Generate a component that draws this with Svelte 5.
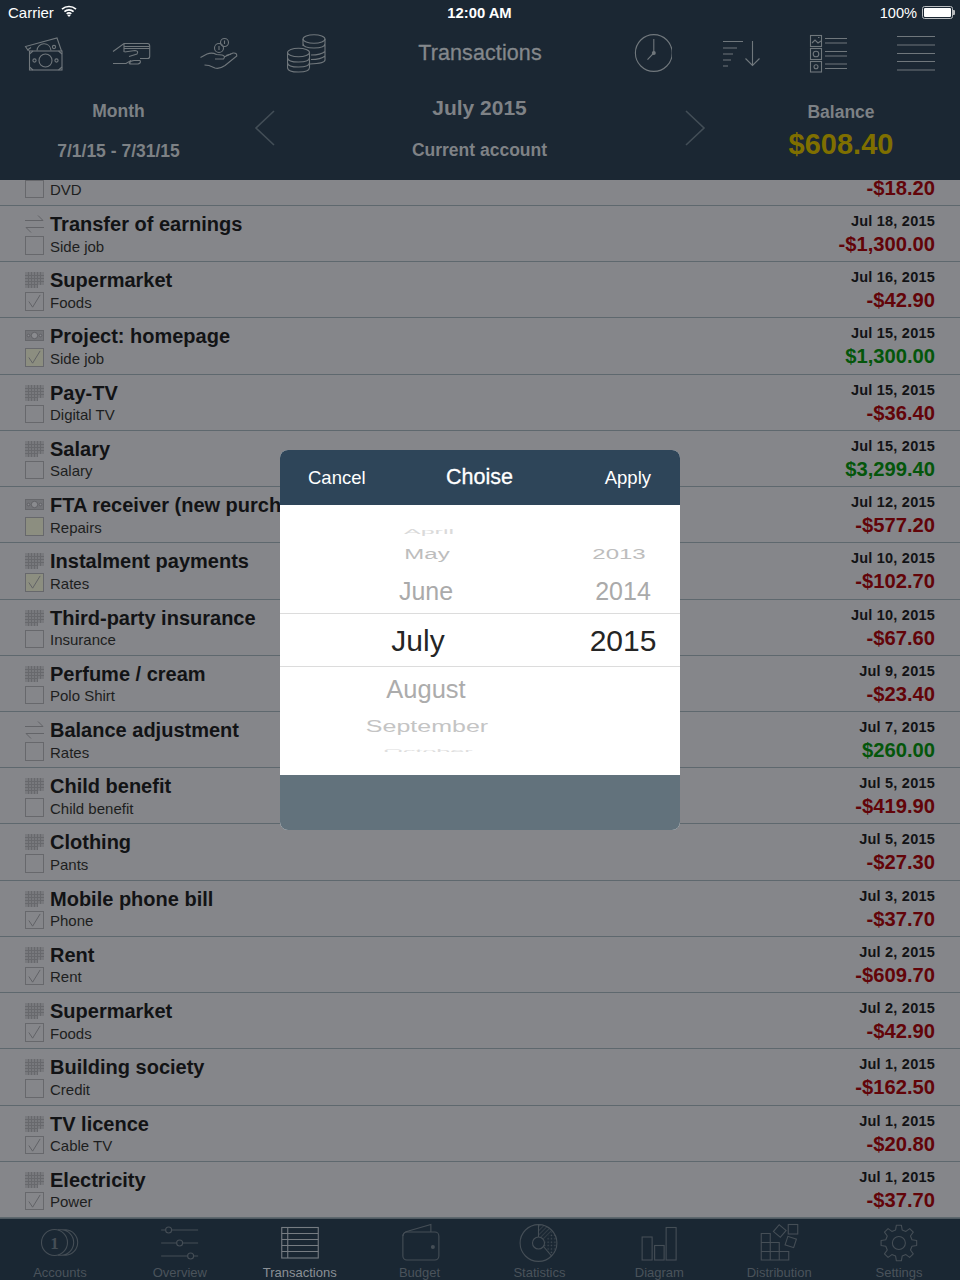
<script>
  const rows = [
    { t: '', s: 'DVD', d: '', a: '-$18.20', k: '', c: 0 },
    { t: 'Transfer of earnings', s: 'Side job', d: 'Jul 18, 2015', a: '-$1,300.00', k: 'transfer', c: 0 },
    { t: 'Supermarket', s: 'Foods', d: 'Jul 16, 2015', a: '-$42.90', k: 'grid', c: 1 },
    { t: 'Project: homepage', s: 'Side job', d: 'Jul 15, 2015', a: '$1,300.00', k: 'money', c: 1, y: 1 },
    { t: 'Pay-TV', s: 'Digital TV', d: 'Jul 15, 2015', a: '-$36.40', k: 'grid', c: 0 },
    { t: 'Salary', s: 'Salary', d: 'Jul 15, 2015', a: '$3,299.40', k: 'grid', c: 0 },
    { t: 'FTA receiver (new purchase)', s: 'Repairs', d: 'Jul 12, 2015', a: '-$577.20', k: 'money', c: 0, y: 1 },
    { t: 'Instalment payments', s: 'Rates', d: 'Jul 10, 2015', a: '-$102.70', k: 'grid', c: 1, y: 1 },
    { t: 'Third-party insurance', s: 'Insurance', d: 'Jul 10, 2015', a: '-$67.60', k: 'grid', c: 0 },
    { t: 'Perfume / cream', s: 'Polo Shirt', d: 'Jul 9, 2015', a: '-$23.40', k: 'grid', c: 0 },
    { t: 'Balance adjustment', s: 'Rates', d: 'Jul 7, 2015', a: '$260.00', k: 'transfer', c: 0 },
    { t: 'Child benefit', s: 'Child benefit', d: 'Jul 5, 2015', a: '-$419.90', k: 'grid', c: 0 },
    { t: 'Clothing', s: 'Pants', d: 'Jul 5, 2015', a: '-$27.30', k: 'grid', c: 0 },
    { t: 'Mobile phone bill', s: 'Phone', d: 'Jul 3, 2015', a: '-$37.70', k: 'grid', c: 1 },
    { t: 'Rent', s: 'Rent', d: 'Jul 2, 2015', a: '-$609.70', k: 'grid', c: 1 },
    { t: 'Supermarket', s: 'Foods', d: 'Jul 2, 2015', a: '-$42.90', k: 'grid', c: 1 },
    { t: 'Building society', s: 'Credit', d: 'Jul 1, 2015', a: '-$162.50', k: 'grid', c: 0 },
    { t: 'TV licence', s: 'Cable TV', d: 'Jul 1, 2015', a: '-$20.80', k: 'grid', c: 1 },
    { t: 'Electricity', s: 'Power', d: 'Jul 1, 2015', a: '-$37.70', k: 'grid', c: 1 }
  ];
  const months = ['April', 'May', 'June', 'July', 'August', 'September', 'October'];
  const years = ['', '2013', '2014', '2015'];
  const tabs = ['Accounts', 'Overview', 'Transactions', 'Budget', 'Statistics', 'Diagram', 'Distribution', 'Settings'];

  const gearPath = (() => {
    const cx = 899, cy = 1243, n = 8, ro = 18, ri = 13.5;
    let d = '';
    for (let i = 0; i < n; i++) {
      const a = (i / n) * Math.PI * 2 - Math.PI / 2;
      const st = Math.PI / n;
      const pts = [
        [ri, a - st * 0.62], [ro, a - st * 0.36], [ro, a + st * 0.36], [ri, a + st * 0.62]
      ];
      for (const [r, t] of pts) {
        d += (d ? 'L' : 'M') + (cx + r * Math.cos(t)).toFixed(1) + ' ' + (cy + r * Math.sin(t)).toFixed(1);
      }
    }
    return d + 'Z';
  })();
</script>

{#snippet kindIcon(k)}
  {#if k === 'grid'}
    <svg class="kind" viewBox="0 0 19 16" width="19" height="16">
      <rect x="0" y="0" width="19" height="13" class="kfill" />
      <rect x="0" y="13" width="13" height="3" class="kfill" />
      <path d="M3.5 0V16M6.5 0V16M9.5 0V16M12.5 0V16M15.5 0V13M0 3.5H19M0 6.5H19M0 9.5H19M0 12.5H13" class="kgrid" />
    </svg>
  {:else if k === 'transfer'}
    <svg class="kind" viewBox="0 0 19 16" width="19" height="16">
      <path d="M0 4.5H18L13 -.5M19 11.5H1L6 16.5" class="kline" />
    </svg>
  {:else if k === 'money'}
    <svg class="kind" viewBox="0 0 19 16" width="19" height="16">
      <rect x="0.5" y="2.5" width="18" height="10" class="kmoney" />
      <circle cx="9.5" cy="7.5" r="3.2" class="kmoneyc" />
      <circle cx="3.5" cy="7.5" r="1.3" class="kmoneyc" />
      <circle cx="15.5" cy="7.5" r="1.3" class="kmoneyc" />
    </svg>
  {:else}
    <span class="kind"></span>
  {/if}
{/snippet}

<div class="page">
  <header class="head">
    <div class="status">
      <div class="st-left">
        <span>Carrier</span>
        <svg width="16" height="12" viewBox="0 0 16 12">
          <path d="M1 4.2C5 .6 11 .6 15 4.2M3.4 6.6C6 4.3 10 4.3 12.6 6.6M5.7 8.8C7 7.7 9 7.7 10.3 8.8" fill="none" stroke="#fff" stroke-width="1.7" />
          <path d="M8 12L6.2 10.1C7.2 9.3 8.8 9.3 9.8 10.1Z" fill="#fff" />
        </svg>
      </div>
      <span class="st-time">12:00 AM</span>
      <div class="st-right">
        <span>100%</span>
        <span class="batt"><i></i></span>
      </div>
    </div>

    <div class="tools">
      <div class="group">
        <div class="tool">
          <svg viewBox="23 32 40 40" width="40" height="40" class="ic">
            <rect x="29.5" y="50" width="32.5" height="19" />
            <path d="M29.5 53L33 50M62 53L58.5 50M29.5 66L33 69M62 66L58.5 69" />
            <circle cx="45.5" cy="59.5" r="6.5" />
            <circle cx="34.5" cy="59.5" r="1.6" />
            <circle cx="56.5" cy="59.5" r="1.6" />
            <path d="M28.5 50L25.5 45.5L57 37L61.5 50" />
            <path d="M37 49.5C37.5 41 50 40 51 49.5" />
            <circle cx="54" cy="46" r="1.6" />
            <path d="M27.5 49L31 46.5" />
          </svg>
        </div>
        <div class="tool">
          <svg viewBox="111 32 40 40" width="40" height="40" class="ic">
            <path d="M113 50.5L124 42.5H147.5Q149.7 42.5 149.7 45V55.5Q149.7 57.5 147.5 57.5H140" />
            <path d="M124 45.5H149.7M124 47.5H149.7" />
            <path d="M124 43V51M124.5 51L135 49.5Q139 50 137 53L129 55.5" />
            <path d="M113 62.5H126L131 59.5" />
            <path d="M129 62.5Q130.5 59.5 134 59.5H140Q141.5 62 138 63H132Q130 63 129 62.5" />
          </svg>
        </div>
        <div class="tool">
          <svg viewBox="199 32 40 40" width="40" height="40" class="ic">
            <circle cx="224.5" cy="41.5" r="4" />
            <circle cx="219" cy="47" r="4.5" />
            <path d="M200.5 56.5L207 53Q212 51 216.5 53.5L222 54Q226 55 223.5 58L215 58" />
            <path d="M224 56L233 52Q237 51.5 236.8 55L225 64.5Q219 68.5 215 67L209 64.5L204.5 64" />
            <path d="M226 54.5L231 53M219 45V49M224.5 39.5V43" />
          </svg>
        </div>
        <div class="tool">
          <svg viewBox="287 32 40 40" width="40" height="40" class="ic">
            <ellipse cx="314" cy="38" rx="11" ry="4.3" />
            <path d="M303 38V45M325 38V59Q325 62.5 310 63M303 42.5Q303 47 314 47Q325 47 325 42.5M311 54Q321 54 325 50.5M311 58.5Q321 58.5 325 55" />
            <ellipse cx="298.5" cy="51.5" rx="11" ry="4.3" />
            <path d="M287.5 51.5V66.5Q287.5 71 298.5 71Q309.5 71 309.5 66.5V51.5M287.5 56.5Q287.5 61 298.5 61Q309.5 61 309.5 56.5M287.5 61.5Q287.5 66 298.5 66Q309.5 66 309.5 61.5" />
          </svg>
        </div>
      </div>
      <h1 class="title">Transactions</h1>
      <div class="group">
        <div class="tool">
          <svg viewBox="632 32 40 40" width="40" height="40" class="ic">
            <circle cx="653.8" cy="52" r="18.4" />
            <path d="M653.8 38V52L647.5 58.7" />
            <circle cx="653.8" cy="52" r="2" class="solid" />
          </svg>
        </div>
        <div class="tool">
          <svg viewBox="720 32 40 40" width="40" height="40" class="ic">
            <path d="M723 40.5H743M723 47H737M723 53H733M723 59H731M723 65H728" />
            <path d="M752.5 40V65M745.5 57.5L752.5 64.5L759.5 57.5" />
          </svg>
        </div>
        <div class="tool">
          <svg viewBox="808 32 40 40" width="40" height="40" class="ic">
            <rect x="810.5" y="34.5" width="11" height="11" />
            <rect x="810.5" y="47.5" width="11" height="11" />
            <rect x="810.5" y="60.5" width="11" height="10.5" />
            <path d="M825 37.5H847M825 42H847M825 50.5H847M825 55H847M825 63H847M825 67.5H847" />
            <path d="M812 42L815 39L818 42L821 40M818 36.5H819.5" />
            <circle cx="816" cy="53" r="2.8" />
            <circle cx="816" cy="65.8" r="2" />
          </svg>
        </div>
        <div class="tool">
          <svg viewBox="896 32 40 40" width="40" height="40" class="ic">
            <path d="M897 35.5H935M897 44H935M897 52.5H935M897 60.5H935M897 69H935" />
          </svg>
        </div>
      </div>
    </div>

    <div class="period">
      <div class="p-left">
        <div>Month</div>
        <div class="range">7/1/15 - 7/31/15</div>
      </div>
      <svg class="chev" width="22" height="38" viewBox="0 0 22 38"><path d="M20 2L2 19L20 36" /></svg>
      <div class="p-mid">
        <div class="big">July 2015</div>
        <div class="acct">Current account</div>
      </div>
      <svg class="chev right" width="22" height="38" viewBox="0 0 22 38"><path d="M2 2L20 19L2 36" /></svg>
      <div class="p-right">
        <div>Balance</div>
        <div class="bal">$608.40</div>
      </div>
    </div>
  </header>

  <main class="list">
    {#each rows as r}
      <div class="row">
        <div class="marks">
          {@render kindIcon(r.k)}
          <span class="box" class:yellow={r.y}>
            {#if r.c}
              <svg viewBox="0 0 18 18" width="17" height="17"><path d="M3 9L7 15L15 2" /></svg>
            {/if}
          </span>
        </div>
        <div class="names">
          <div class="name">{r.t}</div>
          <div class="sub">{r.s}</div>
        </div>
        <div class="nums">
          <div class="date">{r.d}</div>
          <div class="amt" class:pos={!r.a.startsWith('-')}>{r.a}</div>
        </div>
      </div>
    {/each}
  </main>

  <nav class="tabs">
    {#each tabs as t, i}
      <div class="tab" class:on={i === 2}>
        <svg class="ticon" viewBox="{i * 119.875 + 30} 1221 60 42" width="60" height="42">
          {#if i === 0}
            <circle cx="54.5" cy="1242.5" r="13" />
            <path d="M58 1229.8H62A12.8 12.8 0 0 1 62 1255.3H58M62 1229.8H66A12.8 12.8 0 0 1 66 1255.3H62" />
            <text x="54.5" y="1248.5" class="one">1</text>
          {:else if i === 1}
            <path d="M161 1230H165.5M171.5 1230H198M161 1243H176.5M182.5 1243H198M161 1256H187.5M193.5 1256H198" />
            <circle cx="168.5" cy="1230" r="3" />
            <circle cx="179.5" cy="1243" r="3" />
            <circle cx="190.5" cy="1256" r="3" />
          {:else if i === 2}
            <rect x="281.5" y="1227.5" width="36.5" height="30.5" />
            <path d="M281.5 1233.5H318M281.5 1239.5H318M281.5 1245.5H318M281.5 1251.5H318M287.5 1227.5V1258" />
          {:else if i === 3}
            <rect x="402.5" y="1232" width="36" height="28" rx="4" />
            <path d="M402.5 1236Q403 1232 408 1231L430.5 1224.5V1232" />
            <circle cx="432.5" cy="1247" r="2" class="solid" />
          {:else if i === 4}
            <defs>
              <pattern id="hatch" width="3" height="3" patternUnits="userSpaceOnUse" patternTransform="rotate(45)">
                <path d="M0 0V3" />
              </pattern>
              <pattern id="dots" width="3.4" height="3.4" patternUnits="userSpaceOnUse">
                <circle cx="1.2" cy="1.2" r=".7" class="solid" />
              </pattern>
            </defs>
            <path d="M539 1224.6A18.4 18.4 0 0 1 553 1231L545 1239L539 1237Z" fill="url(#hatch)" class="nostroke" />
            <path d="M553 1231A18.4 18.4 0 0 1 552 1256L544 1246.5L545 1241Z" fill="url(#dots)" class="nostroke" />
            <circle cx="539" cy="1243" r="18.4" />
            <circle cx="539" cy="1243" r="6" />
            <path d="M539 1224.6V1237M544 1246.5L552 1256" />
          {:else if i === 5}
            <rect x="642.5" y="1237" width="10" height="23" />
            <rect x="655" y="1245.5" width="9.5" height="14.5" />
            <rect x="666.5" y="1227.5" width="10" height="32.5" />
          {:else if i === 6}
            <path d="M761.5 1233.5H770.5V1242.5H779.5V1251.5H789V1260H761.5ZM761.5 1242.5H770.5V1260M761.5 1251.5H779.5V1260" />
            <rect x="775.5" y="1226.5" width="9" height="9" transform="rotate(40 780 1231)" />
            <rect x="788.5" y="1224.5" width="9.5" height="9.5" />
            <rect x="786.5" y="1237.5" width="9" height="9" transform="rotate(18 791 1242)" />
          {:else}
            <path d={gearPath} stroke-linejoin="round" />
            <circle cx="899" cy="1243" r="6.5" />
          {/if}
        </svg>
        <span>{t}</span>
      </div>
    {/each}
  </nav>

  <div class="scrim">
    <section class="modal">
      <div class="m-head">
        <span class="m-btn">Cancel</span>
        <span class="m-title">Choise</span>
        <span class="m-btn end">Apply</span>
      </div>
      <div class="wheel">
        <div class="band"></div>
        {#each months as m, i}
          <div class="cell mon r{i}"><span>{m}</span></div>
        {/each}
        {#each years as y, i}
          {#if y}
            <div class="cell yr r{i}"><span>{y}</span></div>
          {/if}
        {/each}
      </div>
      <div class="m-foot"></div>
    </section>
  </div>
</div>

<style>
  :global(body) { margin: 0; background: #85868a; }
  .page {
    position: relative;
    width: 960px;
    height: 1280px;
    overflow: hidden;
    display: flex;
    flex-direction: column;
    font-family: "Liberation Sans", Arial, sans-serif;
    background: #85868a;
  }

  .head { height: 180px; flex: none; background: #1b2733; display: flex; flex-direction: column; color: #7f8286; position: relative; z-index: 1; }
  .status {
    height: 25px; flex: none; padding: 0 7px 0 8px;
    display: grid; grid-template-columns: 1fr auto 1fr; align-items: center;
    color: #fff; font-size: 15px;
  }
  .st-left { display: flex; align-items: center; gap: 7px; }
  .st-left svg { margin-top: -3px; }
  .st-time { font-weight: 700; font-size: 14.8px; transform: translateX(-1px); }
  .st-right { display: flex; align-items: center; justify-content: flex-end; gap: 5px; }
  .st-right span:first-child { font-size: 14.6px; }
  .batt { width: 27px; height: 9px; border: 1px solid #b9bcbf; border-radius: 2.5px; padding: 1px; position: relative; display: block; }
  .batt i { display: block; width: 100%; height: 100%; background: #fff; border-radius: 1px; }
  .batt::after { content: ""; position: absolute; right: -3px; top: 3px; width: 2px; height: 5px; background: #b9bcbf; border-radius: 0 1px 1px 0; }

  .tools { height: 55px; flex: none; display: flex; align-items: center; justify-content: space-between; }
  .group { display: flex; }
  .tool { width: 88px; display: flex; justify-content: center; }
  .group:first-child .tool { transform: translateX(-1px); }
  .ic { fill: none; stroke: #70777c; stroke-width: 1.1; display: block; }
  .ic .solid { fill: #70777c; stroke: none; }
  .title { margin: 1px 0 0; font-size: 21.5px; font-weight: 400; color: #84888c; letter-spacing: 0.1px; -webkit-text-stroke: 0.3px #84888c; }

  .period {
    flex: 1;
    display: grid;
    grid-template-columns: 237px 56px 1fr 56px 238px;
    align-items: center;
    text-align: center;
    font-weight: 700;
    font-size: 17px;
  }
  .chev { justify-self: center; margin-top: -5px; fill: none; stroke: #434e57; stroke-width: 1.6; }
  .chev.right { transform: translateX(1px); }
  .p-left { display: flex; flex-direction: column; gap: 18.5px; margin-top: 3px; font-size: 17.5px; color: #7d8185; }
  .range { font-size: 17.5px; }
  .p-mid { display: flex; flex-direction: column; gap: 20.5px; margin-top: -3px; }
  .big { font-size: 21px; color: #7f8286; }
  .acct { font-size: 17.5px; color: #7f8286; }
  .p-right { display: flex; flex-direction: column; gap: 5px; margin-top: 2px; font-size: 17.5px; color: #7d8185; }
  .bal { font-size: 29px; color: #7f6f00; line-height: 32px; }

  .list { flex: 1; min-height: 0; overflow: hidden; }
  .row {
    height: 56.22px;
    box-sizing: border-box;
    border-bottom: 1.5px solid #5e686e;
    padding: 0 25px;
    display: grid;
    grid-template-columns: 25px 1fr auto;
    color: #121315;
  }
  .row:first-child { margin-top: -30.2px; }
  .marks { display: flex; flex-direction: column; padding-top: 10px; }
  .kind { display: block; height: 16px; margin-bottom: 4px; fill: none; overflow: visible; }
  .kfill { fill: #78797d; }
  .kgrid { stroke: #68696d; stroke-width: 1; fill: none; }
  .kline { stroke: #636468; stroke-width: 1; fill: none; }
  .kmoney { fill: #737478; stroke: #66676b; }
  .kmoneyc { fill: #8a8b8f; stroke: #5a5b5f; stroke-width: .8; }
  .box { width: 18.5px; height: 18.5px; box-sizing: border-box; border: 1px solid #67686c; display: block; }
  .box svg { display: block; fill: none; stroke: #5f6064; stroke-width: 1; }
  .box.yellow { background: #8c8e80; }
  .names { padding-top: 6px; min-width: 0; white-space: nowrap; }
  .name { font-size: 20px; font-weight: 700; line-height: 24px; height: 24px; }
  .sub { font-size: 15px; line-height: 20px; color: #1d1e20; margin-top: .5px; }
  .nums { text-align: right; padding-top: 6px; }
  .date { font-size: 14.5px; font-weight: 700; line-height: 18px; height: 18px; letter-spacing: 0.22px; }
  .amt { font-size: 20.2px; font-weight: 700; line-height: 24px; color: #620409; margin-top: 2px; }
  .amt.pos { color: #04560b; }

  .tabs {
    height: 62px; flex: none; background: #1a2733; border-top: 1px solid #4f5a61; box-sizing: border-box;
    display: grid; grid-template-columns: repeat(8, 119.875px);
    position: relative; z-index: 1;
  }
  .tab { display: flex; flex-direction: column; align-items: center; font-size: 13px; color: #4a535b; }
  .tab.on { color: #8a9096; }
  .ticon { display: block; margin-top: 2px; height: 42px; fill: none; stroke: #454e56; stroke-width: 1.1; }
  .tab.on .ticon { stroke: #767c82; }
  .ticon :global(.solid) { fill: #454e56; stroke: none; }
  .ticon .nostroke { stroke: none; }
  .ticon .one { font: 700 17px "Liberation Serif", serif; text-anchor: middle; fill: #454e56; stroke: none; }
  .tab span { line-height: 15px; margin-top: 2px; }

  .scrim { position: absolute; inset: 0; z-index: 2; display: flex; align-items: center; justify-content: center; }
  .modal { width: 400px; height: 380px; border-radius: 8px; overflow: hidden; display: flex; flex-direction: column; background: #fff; }
  .m-head {
    height: 55px; flex: none; background: #2e4559; color: #fff;
    display: grid; grid-template-columns: 1fr auto 1fr; align-items: center; padding: 0 29px 0 28px;
  }
  .m-btn { font-size: 18.5px; }
  .m-btn.end { justify-self: end; }
  .m-title { font-size: 21.5px; font-weight: 400; -webkit-text-stroke: 0.3px #fff; margin-top: -1px; }
  .m-foot { height: 55px; flex: none; background: #62727c; }
  .wheel {
    flex: 1;
    display: grid;
    grid-template-columns: 294px 98px 8px;
    grid-template-rows: 22px 14px 26px 46px 54px 44px 31px 10px 23px;
    color: #a9a9a9;
  }
  .band { grid-row: 5; grid-column: 1 / -1; border-top: 1px solid #dcdcdc; border-bottom: 1px solid #dcdcdc; }
  .cell { display: flex; align-items: center; justify-content: center; overflow: hidden; white-space: nowrap; }
  .cell span { display: block; }
  .mon { grid-column: 1; }
  .yr { grid-column: 2; }
  .r0 { grid-row: 2; font-size: 25px; color: #dadada; }
  .r0 span { transform: translate(2px, -3px) scaleY(.28); }
  .r1 { grid-row: 3; font-size: 24px; color: #bdbdbd; }
  .r1 span { transform: scaleY(.62); }
  .r2 { grid-row: 4; font-size: 25px; color: #aaaaaa; }
  .r2 span { transform: translateY(1px); }
  .r3 { grid-row: 5; font-size: 30px; color: #252525; }
  .r3 span { transform: translateY(1px); }
  .mon.r3 span { transform: translate(-9px, 1px); }
  .mon.r2 span { transform: translate(-1px, 1px); }
  .r4 { grid-row: 6; font-size: 25.5px; color: #acacac; }
  .mon.r4 span { transform: translateX(-1px); }
  .r5 { grid-row: 7; font-size: 25px; color: #c4c4c4; }
  .r5 span { transform: scaleY(.65); }
  .r6 { grid-row: 8; font-size: 25px; color: #dedede; }
  .r6 span { transform: translate(1px, 3px) scaleY(.24); }
  .yr.r1 { transform: translateX(-4px); }
  .yr.r1 span { transform: scaleY(.62); }
</style>
